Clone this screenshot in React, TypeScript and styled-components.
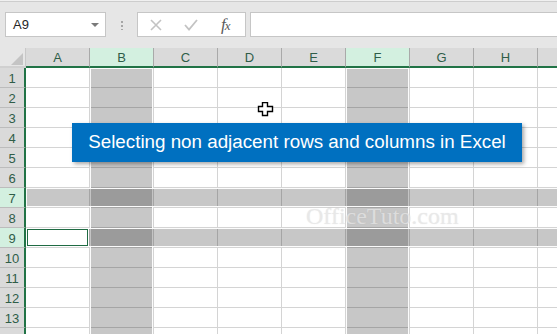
import React from 'react';
import styled, { createGlobalStyle } from 'styled-components';

const GlobalStyle = createGlobalStyle`
    html, body {
        margin: 0;
        padding: 0;
    }
    body {
        width: 557px;
        height: 334px;
        overflow: hidden;
        background: #ffffff;
        font-family: "Liberation Sans", Arial, sans-serif;
    }
`;

const COLUMNS = ['A', 'B', 'C', 'D', 'E', 'F', 'G', 'H', 'I'];
const SELECTED_COLUMNS = ['B', 'F'];
const SELECTED_ROWS = [7, 9];
const ROW_COUNT = 14;
const ROW_HEIGHT = 20;
const COL_WIDTH = 64;
const ROW_HEADER_WIDTH = 26;

const Window = styled.div`
    position: relative;
    width: 557px;
    height: 334px;
    overflow: hidden;
    display: flex;
    flex-direction: column;
`;

const TopBar = styled.div`
    height: 48px;
    flex-shrink: 0;
    display: flex;
    align-items: flex-start;
    padding: 12px 0 0 5px;
    box-sizing: border-box;
    background: linear-gradient(#f0f0f0 0 1px, #cdcdcd 1px 2px, #e6e6e6 2px);
`;

const NameBox = styled.div`
    width: 101px;
    height: 25px;
    box-sizing: border-box;
    border: 1px solid #c6c6c6;
    background: #ffffff;
    display: flex;
    align-items: center;
    justify-content: space-between;
    padding: 0 6px 0 7px;
    font-size: 13px;
    color: #262626;
`;

const Caret = styled.span`
    width: 0;
    height: 0;
    border-left: 4px solid transparent;
    border-right: 4px solid transparent;
    border-top: 4px solid #7a7a7a;
    margin-top: 1px;
`;

const Grip = styled.div`
    width: 2px;
    height: 10px;
    margin: 8px 14px 0 15px;
    background: radial-gradient(circle, #a6a6a6 0 1px, transparent 1.2px) 0 0 / 2px 4px repeat-y;
`;

const FormulaButtons = styled.div`
    width: 109px;
    height: 25px;
    box-sizing: border-box;
    border: 1px solid #c6c6c6;
    background: #ffffff;
    display: flex;
    align-items: center;
    padding-left: 12px;
    gap: 22px;
`;

const FxLabel = styled.span`
    font-family: "Liberation Serif", "Times New Roman", serif;
    font-style: italic;
    font-size: 17px;
    color: #5a5a5a;
    margin-left: 1px;
    letter-spacing: -1px;
    line-height: 1;

    small {
        font-size: 13px;
    }
`;

const FormulaInput = styled.div`
    flex: 1;
    height: 25px;
    margin-left: 4px;
    margin-right: -4px;
    box-sizing: border-box;
    border: 1px solid #c6c6c6;
    background: #ffffff;
`;

const Sheet = styled.div`
    flex: 1;
    display: flex;
    flex-direction: column;
`;

const HeaderRow = styled.div`
    display: grid;
    grid-template-columns: ${ROW_HEADER_WIDTH}px repeat(${COLUMNS.length}, ${COL_WIDTH}px);
    height: 20px;
`;

const Corner = styled.div`
    position: relative;
    background: #e6e6e6;
    border-right: 1px solid #c8c8c8;
    border-bottom: 2px solid #d0d0d0;
    box-sizing: border-box;

    &::after {
        content: '';
        position: absolute;
        right: 2px;
        bottom: 1px;
        border-left: 12px solid transparent;
        border-bottom: 12px solid #c4c4c4;
    }
`;

const ColumnHeader = styled.div<{ $active: boolean }>`
    box-sizing: border-box;
    background: ${(p) => (p.$active ? '#d3f0e0' : '#dadada')};
    border-right: 1px solid #a9a9a9;
    border-bottom: 2px solid #217346;
    display: flex;
    align-items: center;
    justify-content: center;
    font-size: 13px;
    color: #2f5d48;
    padding-top: 1px;
`;

const Body = styled.div`
    position: relative;
    flex: 1;
`;

const Row = styled.div`
    display: grid;
    grid-template-columns: ${ROW_HEADER_WIDTH}px repeat(${COLUMNS.length}, ${COL_WIDTH}px);
    height: ${ROW_HEIGHT}px;
`;

const RowHeader = styled.div<{ $active: boolean }>`
    box-sizing: border-box;
    background: ${(p) => (p.$active ? '#d3f0e0' : '#dadada')};
    border-right: 2px solid #217346;
    border-bottom: 1px solid #bcbcbc;
    display: flex;
    align-items: center;
    justify-content: center;
    font-size: 13px;
    color: #2f5d48;
    padding-top: 1px;
`;

const Cell = styled.div`
    box-sizing: border-box;
    background: #ffffff;
    border-right: 1px solid #d4d4d4;
    border-bottom: 1px solid #d4d4d4;
`;

const Selection = styled.div`
    position: absolute;
    box-sizing: border-box;
    background: rgba(0, 0, 0, 0.22);
    border: 1px solid rgba(255, 255, 255, 0.95);
`;

const ActiveCell = styled.div`
    position: absolute;
    box-sizing: border-box;
    background: #ffffff;
    border: 1px solid #ffffff;
    outline: 1px solid #1f6b43;
    outline-offset: -2px;
`;

const Watermark = styled.div`
    position: absolute;
    left: 306px;
    top: 203px;
    font-family: "Liberation Serif", "Times New Roman", serif;
    font-size: 24px;
    color: rgba(232, 232, 232, 0.75);
    text-shadow: 0 0 1px rgba(140, 140, 140, 0.2);
    pointer-events: none;
`;

const Banner = styled.div`
    position: absolute;
    left: 72px;
    top: 123px;
    width: 450px;
    height: 39px;
    background: #0070c0;
    box-shadow: 2px 2px 4px rgba(0, 0, 0, 0.35);
    display: flex;
    align-items: center;
    justify-content: center;
    color: #ffffff;
    font-size: 18.8px;
    padding-bottom: 1px;
    box-sizing: border-box;
    white-space: nowrap;
`;

const Cursor = styled.svg`
    position: absolute;
    left: 257px;
    top: 102px;
`;

const CancelIcon = () => (
    <svg width="12" height="12" viewBox="0 0 12 12">
        <path d="M1 1 L11 11 M11 1 L1 11" stroke="#c3c3c3" strokeWidth="1.6" fill="none" />
    </svg>
);

const CheckIcon = () => (
    <svg width="14" height="12" viewBox="0 0 14 12">
        <path d="M1 6 L5 10.5 L13 1" stroke="#c3c3c3" strokeWidth="1.8" fill="none" />
    </svg>
);

const App: React.FC = () => {
    const rows = Array.from({ length: ROW_COUNT }, (_, i) => i + 1);

    return (
        <Window>
            <GlobalStyle />
            <TopBar>
                <NameBox>
                    <span>A9</span>
                    <Caret />
                </NameBox>
                <Grip />
                <FormulaButtons>
                    <CancelIcon />
                    <CheckIcon />
                    <FxLabel>
                        f<small>x</small>
                    </FxLabel>
                </FormulaButtons>
                <FormulaInput />
            </TopBar>

            <Sheet>
                <HeaderRow>
                    <Corner />
                    {COLUMNS.map((c) => (
                        <ColumnHeader key={c} $active={SELECTED_COLUMNS.includes(c)}>
                            {c}
                        </ColumnHeader>
                    ))}
                </HeaderRow>

                <Body>
                    {rows.map((r) => (
                        <Row key={r}>
                            <RowHeader $active={SELECTED_ROWS.includes(r)}>{r}</RowHeader>
                            {COLUMNS.map((c) => (
                                <Cell key={c} />
                            ))}
                        </Row>
                    ))}

                    {/* selected whole columns */}
                    {SELECTED_COLUMNS.map((c) => {
                        const idx = COLUMNS.indexOf(c);
                        return (
                            <Selection
                                key={c}
                                style={{ left: ROW_HEADER_WIDTH + idx * COL_WIDTH, top: 0, width: COL_WIDTH - 1, bottom: -2 }}
                            />
                        );
                    })}

                    {/* selected whole rows */}
                    {SELECTED_ROWS.map((r) => (
                        <Selection
                            key={r}
                            style={{ left: ROW_HEADER_WIDTH, top: (r - 1) * ROW_HEIGHT, height: ROW_HEIGHT - 1, right: -2 }}
                        />
                    ))}

                    <ActiveCell style={{ left: ROW_HEADER_WIDTH, top: 8 * ROW_HEIGHT, width: COL_WIDTH - 1, height: ROW_HEIGHT - 1 }} />
                </Body>
            </Sheet>

            <Watermark>OfficeTuto.com</Watermark>

            <Banner>Selecting non adjacent rows and columns in Excel</Banner>

            <Cursor width="17" height="15" viewBox="0 0 17 15">
                <path
                    d="M5.5 0.5 H10.5 V4.5 H15.5 V9.5 H10.5 V13.5 H5.5 V9.5 H1.5 V4.5 H5.5 Z"
                    fill="#ffffff"
                    stroke="#000000"
                    strokeWidth="1.4"
                />
            </Cursor>
        </Window>
    );
};

export default App;
